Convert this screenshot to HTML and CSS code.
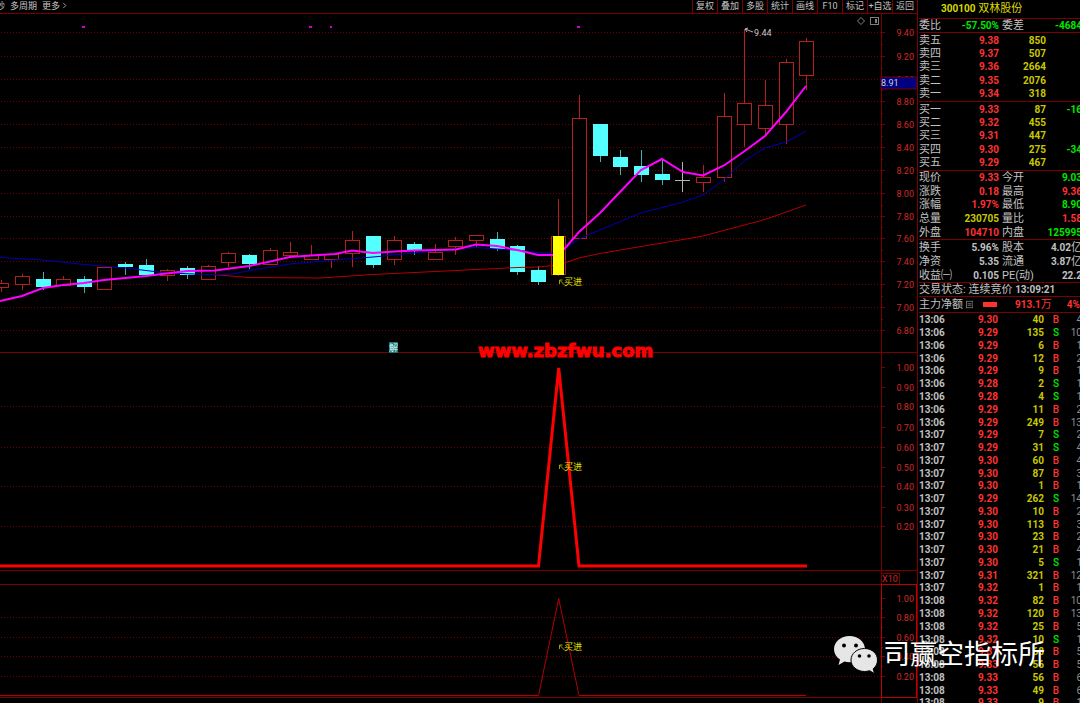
FILE: index.html
```html
<!DOCTYPE html>
<html lang="zh-CN">
<head>
    <meta charset="UTF-8">
    <meta name="viewport" content="width=device-width, initial-scale=1.0">
    <title>300100 双林股份</title>
    <link rel="stylesheet" href="styles.css">
</head>
<body>
    <main class="charts">
        <nav class="toolbar">
            <div class="periods">
                <button type="button">秒</button>
                <button type="button">多周期</button>
                <button type="button">更多
                    <svg class="chevron" viewBox="0 0 5 8"><path d="M1 1l3 3-3 3"/></svg>
                </button>
            </div>
            <div class="tools">
                <button type="button">复权</button>
                <button type="button">叠加</button>
                <button type="button">多股</button>
                <button type="button">统计</button>
                <button type="button">画线</button>
                <button type="button">F10</button>
                <button type="button">标记</button>
                <button type="button">+自选</button>
                <button type="button">返回</button>
            </div>
        </nav>

        <svg class="panel" viewBox="0 14 918 339">
            <g id="price-grid"></g>
            <g id="candles"></g>
            <path class="ma-slow" d="M213 274.500L249 277.500L320 278L373 274.500L456 270.500L517 267.500L538 267L558 265L579 258L600 253.500L641 246.500L683 239.500L703 236L765 219.500L806 205"/>
            <path class="ma-mid" d="M0 257.500L43 260L84 264.500L125 268L167 273L208 274.500L232 274L250 270.500L290 264L335 260L373 257L414 253L456 248.500L476 247.500L497 249L517 250L538 252.500L558 253L567 247L579 239L600 230L641 213L683 202L703 195L724 179.500L744 161L765 148L786 142L806 131"/>
            <path class="ma-fast" d="M0 301L22 296L43 288L63 285L84 283L104 280L146 276L187 271L215 270.500L249 266L270 261.500L290 257L311 255.500L335 254L352 250.500L373 253L394 251.500L414 250.500L456 249.500L476 244.500L497 246L517 250L538 255L558 255L567 246L579 232L600 213L620 192L641 170L662 159L683 172L703 175.500L724 165.500L744 151.500L765 136L786 112L806 86"/>
            <rect class="signal" x="553" y="236" width="11" height="39"/>
            <g class="dots">
                <rect x="82" y="26" width="3" height="2"/>
                <rect x="309" y="26" width="3" height="2"/>
                <rect x="330" y="26" width="2" height="2"/>
                <rect x="577" y="26" width="3" height="2"/>
            </g>
            <path class="pointer" d="M745 29L753 32M745 29L748 28M745 29L747 32"/>
            <text class="high" x="754" y="36">9.44</text>
            <path class="buy-arrow" d="M559.500 284v-4h3M559.500 280l5 5"/>
            <text class="buy" x="564" y="285">买进</text>
            <g class="corner-icons">
                <path d="M861 17.500l3.500 3.500-3.500 3.500-3.500-3.500z"/>
                <rect x="870.500" y="17.500" width="8" height="7"/>
                <rect class="solid" x="875" y="19" width="2" height="4"/>
            </g>
            <path class="frame" d="M0 352.500H918M881.500 14V353M917.500 14V353"/>
            <rect class="badge" x="389" y="342" width="9" height="11"/>
            <text class="badge-text" x="389" y="351">解</text>
            <g id="price-axis"></g>
            <rect class="price-tag" x="881" y="77" width="36" height="12"/>
            <text class="tag-text" x="881" y="86">8.91</text>
        </svg>

        <svg class="panel" viewBox="0 353 918 232">
            <g id="signal-grid"></g>
            <path class="frame" d="M0 570.500H918M0 584.500H918M881.500 353V585M917.500 353V585"/>
            <path class="peak" d="M0 566H538.500L558.700 368L579 566H807"/>
            <path class="buy-arrow" d="M559.500 469v-4h3M559.500 465l5 5"/>
            <text class="buy" x="564" y="470">买进</text>
            <text class="site" x="478" y="357">www.zbzfwu.com</text>
            <g id="signal-axis"></g>
            <rect class="scale-box" x="881.500" y="573.500" width="18" height="11"/>
            <text class="scale" x="882" y="582">X10</text>
        </svg>

        <svg class="panel" viewBox="0 585 918 118">
            <g id="sub-grid"></g>
            <path class="frame" d="M0 697.500H881M881.500 585V703M917.500 585V703"/>
            <path class="peak-thin" d="M0 695.500H538.500L558.700 598.500L579 695.500H806"/>
            <path class="buy-arrow" d="M559.500 649v-4h3M559.500 645l5 5"/>
            <text class="buy" x="564" y="650">买进</text>
            <g id="sub-axis"></g>
            <rect class="sub-frame" x="881.500" y="584.500" width="35" height="113"/>
        </svg>
    </main>

    <aside class="quote">
        <h1 class="name"><b>300100</b> 双林股份</h1>
        <dl class="block single">
            <div><dt>委比</dt><dd class="down">-57.50%</dd></div>
            <div><dt>委差</dt><dd class="down">-4684</dd></div>
        </dl>
        <table class="block depth">
            <tbody id="asks"></tbody>
        </table>
        <table class="block depth">
            <tbody id="bids"></tbody>
        </table>
        <dl class="block five">
            <div><dt>现价</dt><dd class="up">9.33</dd></div>
            <div><dt>今开</dt><dd class="down">9.03</dd></div>
            <div><dt>涨跌</dt><dd class="up">0.18</dd></div>
            <div><dt>最高</dt><dd class="up">9.36</dd></div>
            <div><dt>涨幅</dt><dd class="up">1.97%</dd></div>
            <div><dt>最低</dt><dd class="down">8.90</dd></div>
            <div><dt>总量</dt><dd class="vol">230705</dd></div>
            <div><dt>量比</dt><dd class="up">1.58</dd></div>
            <div><dt>外盘</dt><dd class="up">104710</dd></div>
            <div><dt>内盘</dt><dd class="down">125995</dd></div>
        </dl>
        <dl class="block three">
            <div><dt>换手</dt><dd>5.96%</dd></div>
            <div><dt>股本</dt><dd>4.02<span>亿</span></dd></div>
            <div><dt>净资</dt><dd>5.35</dd></div>
            <div><dt>流通</dt><dd>3.87<span>亿</span></dd></div>
            <div><dt>收益㈠</dt><dd>0.105</dd></div>
            <div><dt>PE(动)</dt><dd>22.2</dd></div>
        </dl>
        <p class="block status">交易状态: 连续竞价 <b>13:09:21</b></p>
        <p class="block flow">
            <span>主力净额</span>
            <svg class="list-icon" viewBox="0 0 9 9"><rect x=".5" y=".5" width="8" height="8"/><path d="M2 3.500h5M2 5.500h5"/></svg>
            <i class="flow-bar"></i>
            <b class="up amount">913.1<span>万</span></b>
            <b class="up">4%</b>
        </p>
        <table class="block ticks">
            <tbody id="ticks"></tbody>
        </table>
    </aside>

    <div class="watermark">
        <svg class="wechat" viewBox="0 0 44 38">
            <path d="M15.500 0C7 0 0 5.800 0 13.200c0 4.200 2.300 7.700 6 10.200L4.500 29l6-3.500c1.700.5 3.300.8 5 .8 8.500 0 15.500-5.800 15.500-13.100S24 0 15.500 0z"/>
            <path class="front" d="M30.500 12.500C23 12.500 17 17.600 17 24s6 11.500 13.500 11.500c1.800 0 3.500-.3 5-.8l5 2.800-1.300-4.700c2.800-2.100 4.300-5.300 4.300-8.800 0-6.400-5.500-11.500-13-11.500z"/>
            <g class="eyes"><circle cx="10" cy="9.500" r="2"/><circle cx="22" cy="9.500" r="2"/><circle cx="25.500" cy="20" r="1.800"/><circle cx="35" cy="20" r="1.800"/></g>
        </svg>
        <span>司赢空指标所</span>
    </div>

    <script src="script.js"></script>
</body>
</html>
```
FILE: styles.css
```css
* {
    box-sizing: border-box;
}
body {
    display: flex;
    height: 100vh;
    margin: 0;
    overflow: hidden;
    background-color: #000;
    color: #c0c0c0;
    font-family: Roboto, "Noto Sans CJK SC", sans-serif;
}
button {
    padding: 0;
    border: 0;
    background: none;
    color: inherit;
    font: inherit;
}
.charts {
    flex: 1;
    min-width: 0;
}
.toolbar {
    display: flex;
    justify-content: space-between;
    height: 14px;
    border-bottom: 1px solid #7a0000;
    font-size: 9px;
    line-height: 13px;
    overflow: hidden;
}
.periods {
    display: flex;
    gap: 5px;
    margin-left: -4px;
}
.periods button {
    white-space: nowrap;
}
.chevron {
    width: 5px;
    height: 7px;
    fill: none;
    stroke: #b4b4b4;
}
.tools {
    display: grid;
    grid-template-columns: repeat(9, 25px);
    border-right: 1px solid #7a0000;
}
.tools button {
    border-left: 1px solid #7a0000;
    white-space: nowrap;
}

/* charts */
.panel {
    display: block;
    width: 100%;
    height: auto;
    overflow: visible;
}
.panel path,
.corner-icons rect {
    fill: none;
}
.panel text {
    font-size: 9px;
}
.grid {
    stroke: #700000;
    stroke-dasharray: 1 2;
}
.frame,
.tick {
    stroke: #7a0000;
}
.axis-label {
    fill: #d22828;
    text-anchor: end;
}
.up-candle {
    fill: #000;
    stroke: #b42020;
}
.up-wick {
    stroke: #b42020;
}
.down-candle {
    fill: #54ffff;
}
.down-wick {
    stroke: #3cb4b4;
}
.flat {
    stroke: #b4b4b4;
}
.panel .ma-slow {
    stroke: #b40000;
}
.panel .ma-mid {
    stroke: #0000b4;
}
.panel .ma-fast {
    stroke: #f0f;
    stroke-width: 2px;
}
.signal {
    fill: #ff0;
}
.dots {
    fill: #d000d0;
}
.pointer {
    stroke: #b4b4b4;
}
.high {
    fill: #c8c8c8;
}
.buy {
    fill: #e0e000;
}
.buy-arrow {
    stroke: #a0a000;
}
.corner-icons {
    stroke: #808080;
}
.corner-icons .solid {
    fill: #808080;
    stroke: none;
}
.badge {
    fill: #187878;
}
.badge-text {
    fill: #e0ffff;
}
.price-tag {
    fill: #000080;
    stroke: #7a0000;
}
.tag-text {
    fill: #d0d0d0;
}
.peak {
    stroke: #f00;
    stroke-width: 3px;
}
.peak-thin {
    stroke: #b40000;
}
.panel .site {
    fill: #f00;
    stroke: #f00;
    stroke-width: 1px;
    font: bold 18px "DejaVu Sans", sans-serif;
}
.scale-box {
    fill: none;
    stroke: #7a0000;
}
.scale {
    fill: #d22828;
}
.sub-frame {
    fill: none;
    stroke: #c00000;
}

/* quote column */
.quote {
    flex: none;
    width: 162px;
    padding-left: 1px;
    overflow: hidden;
    font-size: 11px;
    line-height: 13px;
    white-space: nowrap;
}
.quote dl,
.quote p,
.quote dd,
.quote h1 {
    margin: 0;
}
.quote b,
.quote dd,
.quote td {
    font-size: 10px;
    font-weight: bold;
}
.quote dd span,
.quote b span {
    font-size: 11px;
    font-weight: normal;
}
.name {
    height: 18px;
    padding-left: 22px;
    color: #d8d800;
    font-size: 11px;
    font-weight: normal;
    line-height: 18px;
}
.block {
    border-top: 1px solid #7a0000;
}
dl.block {
    display: grid;
    grid-template-columns: 80px 80px;
    column-gap: 3px;
    align-items: center;
}
dl.block div {
    display: flex;
    justify-content: space-between;
    align-items: center;
}
.single {
    height: 14px;
}
.five {
    height: 69px;
}
.three {
    height: 43px;
}
.depth,
.ticks {
    width: 163px;
    table-layout: fixed;
    border-spacing: 0;
}
.depth {
    height: 69px;
    padding-top: 1px;
}
.quote th,
.quote td {
    padding: 0;
    line-height: 12px;
    text-align: right;
}
.quote th {
    width: 28px;
    font-weight: normal;
    text-align: left;
}
.depth .price {
    width: 52px;
}
.depth .vol {
    width: 47px;
}
.up {
    color: #ff3232;
}
.down {
    color: #00e600;
}
.vol {
    color: #c8c800;
}
.status {
    height: 14px;
}
.flow {
    display: flex;
    align-items: center;
    height: 16px;
}
.list-icon {
    width: 9px;
    height: 9px;
    margin-left: 3px;
    fill: none;
    stroke: #808080;
}
.flow-bar {
    width: 17px;
    height: 5px;
    margin-left: 10px;
    background-color: #ff3232;
}
.amount {
    margin: 0 15px 0 18px;
}
.ticks {
    height: 398px;
    padding-top: 1px;
}
.ticks .time {
    width: 32px;
    text-align: left;
}
.ticks .price {
    width: 47px;
}
.ticks .vol {
    width: 46px;
}
.quote .side {
    width: 15px;
    font-weight: 500;
}
.quote .count {
    color: #909090;
    font-weight: normal;
}

.watermark {
    position: absolute;
    right: 35px;
    bottom: 28px;
    display: flex;
    align-items: center;
    gap: 5px;
    color: #fff;
    font-size: 27px;
    line-height: 40px;
}
.wechat {
    width: 44px;
    height: 38px;
    fill: #e6e6e6;
}
.wechat .front {
    stroke: #000;
}
.wechat .eyes {
    fill: #000;
}
```
FILE: script.js
```js
const NS = 'http://www.w3.org/2000/svg';

function add(parent, tag, attrs, text) {
    const el = document.createElementNS(NS, tag);
    Object.keys(attrs).forEach(key => el.setAttribute(key, attrs[key]));
    if (text) el.textContent = text;
    parent.appendChild(el);
}

// kind, centre, high, top, bottom, low
const candles = [
    ['u', 1, 280, 283, 287, 292], ['u', 22, 274, 276, 284, 290], ['d', 43, 272, 279, 287, 290],
    ['u', 63, 276, 279, 285, 285], ['d', 84, 276, 279, 287, 293], ['u', 104, 267, 267, 289, 289],
    ['d', 125, 262, 264, 267, 275], ['d', 146, 259, 265, 275, 275], ['u', 167, 269, 270, 275, 281],
    ['d', 187, 266, 268, 275, 279], ['u', 208, 265, 266, 279, 279], ['u', 228, 252, 253, 262, 267],
    ['d', 249, 254, 255, 264, 269], ['u', 270, 248, 250, 264, 264], ['u', 290, 242, 252, 255, 255],
    ['u', 311, 245, 255, 259, 259], ['u', 331, 254, 254, 259, 268], ['u', 352, 231, 240, 253, 267],
    ['d', 373, 236, 236, 265, 268], ['u', 394, 236, 240, 259, 265], ['d', 414, 242, 244, 251, 255],
    ['u', 435, 244, 252, 259, 259], ['u', 455, 237, 240, 246, 255], ['u', 476, 235, 235, 240, 248],
    ['d', 497, 232, 239, 249, 251], ['d', 517, 245, 246, 272, 275], ['d', 538, 266, 270, 282, 285],
    ['u', 558, 199, 236, 274, 276], ['u', 579, 95, 118, 238, 238], ['d', 600, 124, 124, 156, 162],
    ['d', 620, 150, 157, 167, 175], ['d', 641, 150, 166, 175, 182], ['d', 662, 159, 174, 180, 185],
    ['f', 682, 162, 180, 180, 192], ['u', 703, 165, 177, 182, 192], ['u', 724, 93, 116, 177, 182],
    ['u', 744, 29, 103, 124, 147], ['u', 765, 80, 105, 128, 136], ['u', 786, 59, 62, 124, 144],
    ['u', 806, 38, 41, 75, 90]
];

const candleLayer = document.getElementById('candles');
candles.forEach(([kind, x, high, top, bottom, low]) => {
    const wick = { u: 'up-wick', d: 'down-wick', f: 'flat' }[kind];
    const c = x + 0.5;
    add(candleLayer, 'path', { class: wick, d: `M${c} ${high}V${low}` });
    if (kind === 'u') {
        add(candleLayer, 'rect', { class: 'up-candle', x: c - 7, y: top + 0.5, width: 14, height: bottom - top });
    } else if (kind === 'd') {
        add(candleLayer, 'rect', { class: 'down-candle', x: x - 7, y: top, width: 15, height: bottom - top });
    } else {
        add(candleLayer, 'path', { class: 'flat', d: `M${x - 7} ${top + 0.5}h15` });
    }
});

function drawScale(name, labels, gridFrom, gridStep) {
    const grid = document.getElementById(name + '-grid');
    const axis = document.getElementById(name + '-axis');
    labels.forEach(([value, y], i) => {
        if (i >= gridFrom && (i - gridFrom) % gridStep === 0) {
            add(grid, 'path', { class: 'grid', d: `M1 ${y + 0.5}H881` });
        }
        add(axis, 'path', { class: 'tick', d: `M881 ${y + 0.5}h4` });
        if (gridStep === 1 && i < labels.length - 1) {
            const half = Math.round((y + labels[i + 1][1]) / 2) + 0.5;
            add(axis, 'path', { class: 'tick', d: `M881 ${half}h2` });
        }
        add(axis, 'text', { class: 'axis-label', x: 914, y: y + 4 }, value);
    });
}

drawScale('price', [
    ['9.40', 32], ['9.20', 56], ['9.00', 79], ['8.80', 101], ['8.60', 124], ['8.40', 147], ['8.20', 170],
    ['8.00', 193], ['7.80', 216], ['7.60', 238], ['7.40', 261], ['7.20', 284], ['7.00', 307], ['6.80', 330]
], 0, 1);
drawScale('signal', [
    ['1.00', 367], ['0.90', 387], ['0.80', 406], ['0.70', 427], ['0.60', 447], ['0.50', 467],
    ['0.40', 486], ['0.30', 507], ['0.20', 526]
], 2, 2);
drawScale('sub', [
    ['1.00', 598], ['0.80', 617], ['0.60', 637], ['0.40', 656], ['0.20', 676]
], 1, 1);

function depthRows(id, rows) {
    document.getElementById(id).innerHTML = rows.map(([label, price, vol, diff]) =>
        `<tr><th scope="row">${label}</th><td class="price up">${price}</td><td class="vol">${vol}</td><td class="down">${diff || ''}</td></tr>`
    ).join('');
}

depthRows('asks', [
    ['卖五', '9.38', 850], ['卖四', '9.37', 507], ['卖三', '9.36', 2664], ['卖二', '9.35', 2076], ['卖一', '9.34', 318]
]);
depthRows('bids', [
    ['买一', '9.33', 87, '-16'], ['买二', '9.32', 455], ['买三', '9.31', 447], ['买四', '9.30', 275, '-34'], ['买五', '9.29', 467]
]);

const ticks = `13:06 9.30 40 B 4
13:06 9.29 135 S 10
13:06 9.29 6 B 1
13:06 9.29 12 B 2
13:06 9.29 9 B 1
13:06 9.28 2 S 1
13:06 9.28 4 S 1
13:06 9.29 11 B 2
13:06 9.29 249 B 13
13:07 9.29 7 S 2
13:07 9.29 31 S 4
13:07 9.30 60 B 4
13:07 9.30 87 B 3
13:07 9.30 1 B 1
13:07 9.29 262 S 14
13:07 9.30 10 B 2
13:07 9.30 113 B 3
13:07 9.30 23 B 2
13:07 9.30 21 B 4
13:07 9.30 5 S 1
13:07 9.31 321 B 12
13:07 9.32 1 B 1
13:08 9.32 82 B 10
13:08 9.32 120 B 13
13:08 9.32 25 B 5
13:08 9.32 10 S 1
13:08 9.31 68 B 5
13:08 9.33 56 B 5
13:08 9.33 56 B 6
13:08 9.33 49 B 6
13:08 9.33 9 B 1`;

document.getElementById('ticks').innerHTML = ticks.split('\n').map(line => {
    const [time, price, vol, side, count] = line.split(' ');
    return `<tr><td class="time">${time}</td><td class="price up">${price}</td><td class="vol">${vol}</td>` +
        `<td class="side ${side === 'B' ? 'up' : 'down'}">${side}</td><td class="count">${count}</td></tr>`;
}).join('');
```
